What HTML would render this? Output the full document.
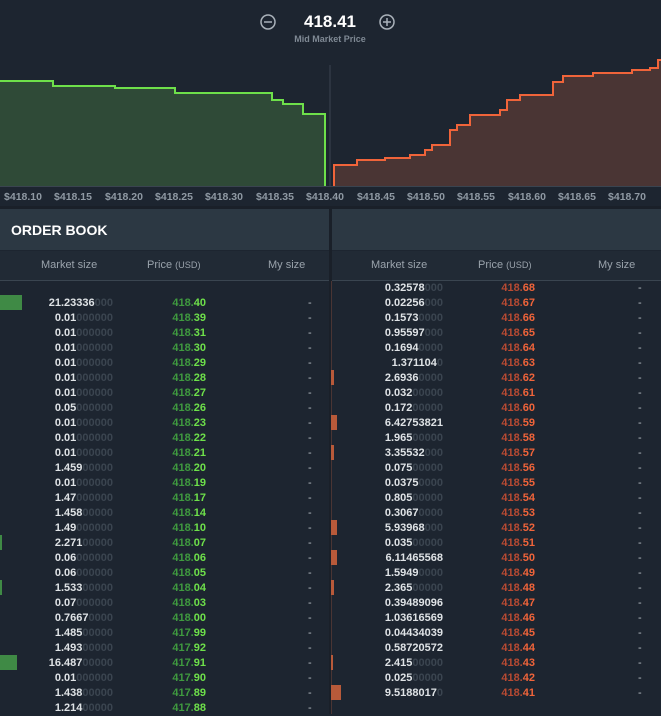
<!DOCTYPE html><html><head><meta charset="utf-8"><style>
body{margin:0;width:661px;height:714px;background:#1d2530;font-family:"Liberation Sans",sans-serif;overflow:hidden;position:relative}
.a{position:absolute}
.ax{position:absolute;top:191px;font-size:10.5px;font-weight:bold;color:#8f99a3;width:50px;text-align:center}
.hd{position:absolute;top:209px;height:41px;background:#2c3843}
.th{position:absolute;top:251px;height:29px;background:#212a35;border-bottom:1px solid #3a4550}
.th span{position:absolute;top:8px;font-size:11px;color:#9aa3ac}
.r{position:absolute;height:15px;font-size:11px;font-weight:bold;line-height:15px}
.sz{position:absolute;right:0;width:120px;text-align:right;color:#dfe3e6}
.sz i{font-style:normal;color:#3b4550}
.pr{position:absolute;width:80px;text-align:right}
.g .pr{color:#3f9a3f}.g .pr b{color:#6ee04a}
.rd .pr{color:#b84a32}.rd .pr b{color:#f0643a}
.ds{position:absolute;color:#b8bec4;font-weight:normal}
.bar{position:absolute;height:15px}
</style></head><body>
<svg class="a" style="left:0;top:0" width="661" height="190">
<line x1="330" y1="65" x2="330" y2="186" stroke="#3a4450" stroke-width="1"/>
<path d="M0 81H53V86H115V88H175V93H272V100H283V104H303V114H325V186H0Z" fill="#2f4a37"/>
<path d="M0 81H53V86H115V88H175V93H272V100H283V104H303V114H325V186" fill="none" stroke="#6ee04a" stroke-width="2"/>
<path d="M334 186V165H357V160H385V158H410V155H425V150H432V145H450V130H457V125H470V115H500V110H507V100H520V95H553V82H563V76H593V73H632V70H650V68H658V60H661V186Z" fill="#4a3534"/>
<path d="M334 186V165H357V160H385V158H410V155H425V150H432V145H450V130H457V125H470V115H500V110H507V100H520V95H553V82H563V76H593V73H632V70H650V68H658V60H661" fill="none" stroke="#f0643a" stroke-width="2"/>
<line x1="0" y1="186.5" x2="661" y2="186.5" stroke="#3a4450"/>
<circle cx="268" cy="22" r="7" fill="none" stroke="#aab2ba" stroke-width="1.5"/><line x1="264" y1="22" x2="272" y2="22" stroke="#aab2ba" stroke-width="1.5"/>
<circle cx="387" cy="22" r="7" fill="none" stroke="#aab2ba" stroke-width="1.5"/><line x1="383" y1="22" x2="391" y2="22" stroke="#aab2ba" stroke-width="1.5"/><line x1="387" y1="18" x2="387" y2="26" stroke="#aab2ba" stroke-width="1.5"/>
</svg>
<div class="a" style="left:280px;top:12px;width:100px;text-align:center;color:#fff;font-weight:bold;font-size:17px">418.41</div>
<div class="a" style="left:270px;top:34px;width:120px;text-align:center;color:#7f8994;font-size:9px;font-weight:bold">Mid Market Price</div>
<div class="ax" style="left:-2px">$418.10</div><div class="ax" style="left:48px">$418.15</div><div class="ax" style="left:99px">$418.20</div><div class="ax" style="left:149px">$418.25</div><div class="ax" style="left:199px">$418.30</div><div class="ax" style="left:250px">$418.35</div><div class="ax" style="left:300px">$418.40</div><div class="ax" style="left:351px">$418.45</div><div class="ax" style="left:401px">$418.50</div><div class="ax" style="left:451px">$418.55</div><div class="ax" style="left:502px">$418.60</div><div class="ax" style="left:552px">$418.65</div><div class="ax" style="left:602px">$418.70</div><div class="ax" style="left:653px">$</div>
<div class="a" style="left:0;top:206px;width:661px;height:3px;background:#1a2029"></div>
<div class="hd" style="left:0;width:329px"><span class="a" style="left:11px;top:13px;color:#fff;font-weight:bold;font-size:14px">ORDER BOOK</span></div>
<div class="hd" style="left:332px;width:329px"></div>
<div class="a" style="left:329px;top:206px;width:3px;height:508px;background:#1a2029"></div>
<div class="th" style="left:0;width:329px"><span style="left:41px">Market size</span><span style="left:147px">Price <small>(USD)</small></span><span style="left:268px">My size</span></div>
<div class="th" style="left:332px;width:329px"><span style="left:39px">Market size</span><span style="left:146px">Price <small>(USD)</small></span><span style="left:266px">My size</span></div>
<div class="a" style="left:331px;top:281px;width:1px;height:433px;background:#4a3534"></div>
<div class="bar" style="left:0;top:295px;width:22px;background:#3f8a45"></div>
<div class="bar" style="left:0;top:535px;width:2px;background:#3f8a45"></div>
<div class="bar" style="left:0;top:580px;width:2px;background:#3f8a45"></div>
<div class="bar" style="left:0;top:655px;width:17px;background:#3f8a45"></div>
<div class="bar" style="left:331px;top:370px;width:3px;background:#b85a3a"></div>
<div class="bar" style="left:331px;top:415px;width:6px;background:#b85a3a"></div>
<div class="bar" style="left:331px;top:445px;width:3px;background:#b85a3a"></div>
<div class="bar" style="left:331px;top:520px;width:6px;background:#b85a3a"></div>
<div class="bar" style="left:331px;top:550px;width:6px;background:#b85a3a"></div>
<div class="bar" style="left:331px;top:580px;width:3px;background:#b85a3a"></div>
<div class="bar" style="left:331px;top:655px;width:2px;background:#b85a3a"></div>
<div class="bar" style="left:331px;top:685px;width:10px;background:#b85a3a"></div>
<div class="a g" style="left:0;top:296px;width:330px">
<style>.g .r,.rd .r{left:0;width:330px;position:relative}.g .sz{left:-7px;width:120px;right:auto}.g .pr{left:126px}.g .ds{left:308px}.rd .sz{left:323px;width:120px;right:auto}.rd .pr{left:455px}.rd .ds{left:638px}</style>
<div class="r"><span class="sz">21.23336<i>000</i></span><span class="pr">418.<b>40</b></span><span class="ds">-</span></div>
<div class="r"><span class="sz">0.01<i>000000</i></span><span class="pr">418.<b>39</b></span><span class="ds">-</span></div>
<div class="r"><span class="sz">0.01<i>000000</i></span><span class="pr">418.<b>31</b></span><span class="ds">-</span></div>
<div class="r"><span class="sz">0.01<i>000000</i></span><span class="pr">418.<b>30</b></span><span class="ds">-</span></div>
<div class="r"><span class="sz">0.01<i>000000</i></span><span class="pr">418.<b>29</b></span><span class="ds">-</span></div>
<div class="r"><span class="sz">0.01<i>000000</i></span><span class="pr">418.<b>28</b></span><span class="ds">-</span></div>
<div class="r"><span class="sz">0.01<i>000000</i></span><span class="pr">418.<b>27</b></span><span class="ds">-</span></div>
<div class="r"><span class="sz">0.05<i>000000</i></span><span class="pr">418.<b>26</b></span><span class="ds">-</span></div>
<div class="r"><span class="sz">0.01<i>000000</i></span><span class="pr">418.<b>23</b></span><span class="ds">-</span></div>
<div class="r"><span class="sz">0.01<i>000000</i></span><span class="pr">418.<b>22</b></span><span class="ds">-</span></div>
<div class="r"><span class="sz">0.01<i>000000</i></span><span class="pr">418.<b>21</b></span><span class="ds">-</span></div>
<div class="r"><span class="sz">1.459<i>00000</i></span><span class="pr">418.<b>20</b></span><span class="ds">-</span></div>
<div class="r"><span class="sz">0.01<i>000000</i></span><span class="pr">418.<b>19</b></span><span class="ds">-</span></div>
<div class="r"><span class="sz">1.47<i>000000</i></span><span class="pr">418.<b>17</b></span><span class="ds">-</span></div>
<div class="r"><span class="sz">1.458<i>00000</i></span><span class="pr">418.<b>14</b></span><span class="ds">-</span></div>
<div class="r"><span class="sz">1.49<i>000000</i></span><span class="pr">418.<b>10</b></span><span class="ds">-</span></div>
<div class="r"><span class="sz">2.271<i>00000</i></span><span class="pr">418.<b>07</b></span><span class="ds">-</span></div>
<div class="r"><span class="sz">0.06<i>000000</i></span><span class="pr">418.<b>06</b></span><span class="ds">-</span></div>
<div class="r"><span class="sz">0.06<i>000000</i></span><span class="pr">418.<b>05</b></span><span class="ds">-</span></div>
<div class="r"><span class="sz">1.533<i>00000</i></span><span class="pr">418.<b>04</b></span><span class="ds">-</span></div>
<div class="r"><span class="sz">0.07<i>000000</i></span><span class="pr">418.<b>03</b></span><span class="ds">-</span></div>
<div class="r"><span class="sz">0.7667<i>0000</i></span><span class="pr">418.<b>00</b></span><span class="ds">-</span></div>
<div class="r"><span class="sz">1.485<i>00000</i></span><span class="pr">417.<b>99</b></span><span class="ds">-</span></div>
<div class="r"><span class="sz">1.493<i>00000</i></span><span class="pr">417.<b>92</b></span><span class="ds">-</span></div>
<div class="r"><span class="sz">16.487<i>00000</i></span><span class="pr">417.<b>91</b></span><span class="ds">-</span></div>
<div class="r"><span class="sz">0.01<i>000000</i></span><span class="pr">417.<b>90</b></span><span class="ds">-</span></div>
<div class="r"><span class="sz">1.438<i>00000</i></span><span class="pr">417.<b>89</b></span><span class="ds">-</span></div>
<div class="r"><span class="sz">1.214<i>00000</i></span><span class="pr">417.<b>88</b></span><span class="ds">-</span></div>
</div>
<div class="a rd" style="left:0;top:281px;width:661px">
<div class="r"><span class="sz">0.32578<i>000</i></span><span class="pr">418.<b>68</b></span><span class="ds">-</span></div>
<div class="r"><span class="sz">0.02256<i>000</i></span><span class="pr">418.<b>67</b></span><span class="ds">-</span></div>
<div class="r"><span class="sz">0.1573<i>0000</i></span><span class="pr">418.<b>66</b></span><span class="ds">-</span></div>
<div class="r"><span class="sz">0.95597<i>000</i></span><span class="pr">418.<b>65</b></span><span class="ds">-</span></div>
<div class="r"><span class="sz">0.1694<i>0000</i></span><span class="pr">418.<b>64</b></span><span class="ds">-</span></div>
<div class="r"><span class="sz">1.371104<i>0</i></span><span class="pr">418.<b>63</b></span><span class="ds">-</span></div>
<div class="r"><span class="sz">2.6936<i>0000</i></span><span class="pr">418.<b>62</b></span><span class="ds">-</span></div>
<div class="r"><span class="sz">0.032<i>00000</i></span><span class="pr">418.<b>61</b></span><span class="ds">-</span></div>
<div class="r"><span class="sz">0.172<i>00000</i></span><span class="pr">418.<b>60</b></span><span class="ds">-</span></div>
<div class="r"><span class="sz">6.42753821</span><span class="pr">418.<b>59</b></span><span class="ds">-</span></div>
<div class="r"><span class="sz">1.965<i>00000</i></span><span class="pr">418.<b>58</b></span><span class="ds">-</span></div>
<div class="r"><span class="sz">3.35532<i>000</i></span><span class="pr">418.<b>57</b></span><span class="ds">-</span></div>
<div class="r"><span class="sz">0.075<i>00000</i></span><span class="pr">418.<b>56</b></span><span class="ds">-</span></div>
<div class="r"><span class="sz">0.0375<i>0000</i></span><span class="pr">418.<b>55</b></span><span class="ds">-</span></div>
<div class="r"><span class="sz">0.805<i>00000</i></span><span class="pr">418.<b>54</b></span><span class="ds">-</span></div>
<div class="r"><span class="sz">0.3067<i>0000</i></span><span class="pr">418.<b>53</b></span><span class="ds">-</span></div>
<div class="r"><span class="sz">5.93968<i>000</i></span><span class="pr">418.<b>52</b></span><span class="ds">-</span></div>
<div class="r"><span class="sz">0.035<i>00000</i></span><span class="pr">418.<b>51</b></span><span class="ds">-</span></div>
<div class="r"><span class="sz">6.11465568</span><span class="pr">418.<b>50</b></span><span class="ds">-</span></div>
<div class="r"><span class="sz">1.5949<i>0000</i></span><span class="pr">418.<b>49</b></span><span class="ds">-</span></div>
<div class="r"><span class="sz">2.365<i>00000</i></span><span class="pr">418.<b>48</b></span><span class="ds">-</span></div>
<div class="r"><span class="sz">0.39489096</span><span class="pr">418.<b>47</b></span><span class="ds">-</span></div>
<div class="r"><span class="sz">1.03616569</span><span class="pr">418.<b>46</b></span><span class="ds">-</span></div>
<div class="r"><span class="sz">0.04434039</span><span class="pr">418.<b>45</b></span><span class="ds">-</span></div>
<div class="r"><span class="sz">0.58720572</span><span class="pr">418.<b>44</b></span><span class="ds">-</span></div>
<div class="r"><span class="sz">2.415<i>00000</i></span><span class="pr">418.<b>43</b></span><span class="ds">-</span></div>
<div class="r"><span class="sz">0.025<i>00000</i></span><span class="pr">418.<b>42</b></span><span class="ds">-</span></div>
<div class="r"><span class="sz">9.5188017<i>0</i></span><span class="pr">418.<b>41</b></span><span class="ds">-</span></div>
</div>
</body></html>
